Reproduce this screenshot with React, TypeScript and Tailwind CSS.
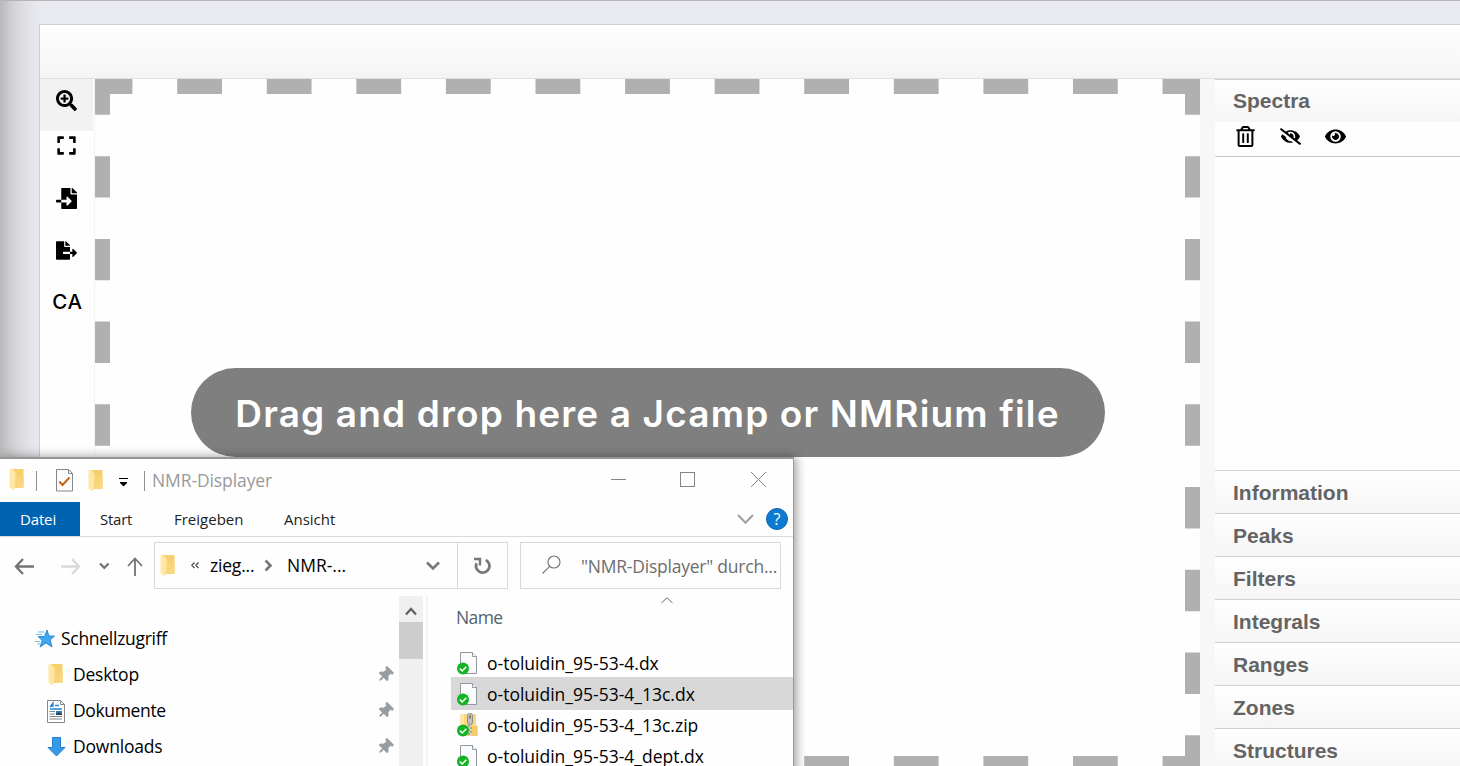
import React from "react";
import {
  FaSearchPlus,
  FaExpand,
  FaFileImport,
  FaFileExport,
  FaRegTrashAlt,
  FaEyeSlash,
  FaEye,
  FaThumbtack,
} from "react-icons/fa";

const sections = ["Information", "Peaks", "Filters", "Integrals", "Ranges", "Zones", "Structures"];

const files = [
  { name: "o-toluidin_95-53-4.dx", zip: false, selected: false },
  { name: "o-toluidin_95-53-4_13c.dx", zip: false, selected: true },
  { name: "o-toluidin_95-53-4_13c.zip", zip: true, selected: false },
  { name: "o-toluidin_95-53-4_dept.dx", zip: false, selected: false },
];

function Folder() {
  return (
    <svg width="15" height="22" viewBox="0 0 15 22" className="block shrink-0">
      <path d="M1 0H14.5V19H10V12L7 10Z" fill="#f6d06c" />
      <path d="M10 12H14.5V19H10Z" fill="#f9d985" />
      <path d="M0.5 0H3L6 3V19L4.5 21.5L0.5 18.5Z" fill="#ffe8a6" />
      <path d="M6 3L7.5 4V19H5.5Z" fill="#fbdc8c" />
      <path d="M7.5 7H14.5V13L10 15V19H6Z" fill="#f8d47a" />
    </svg>
  );
}

function FileIcon({ zip }: { zip: boolean }) {
  return (
    <svg width="22" height="24" viewBox="0 0 22 24" className="block shrink-0">
      {zip ? (
        <g>
          <path d="M3.5 1H19V12L20.5 13V23H3.5Z" fill="#fbd77f" />
          <path d="M3.5 1H7V23H3.5Z" fill="#fee6a6" />
          <path d="M14.5 13H20.5V23H14.5Z" fill="#f5cb6e" />
          <path d="M11 11h4v12h-4z" fill="#ddd2b5" />
          <path d="M11 13h2M13 15h2M11 17h2M13 19h2M11 21h2" stroke="#8b806a" strokeWidth="1.2" />
          <rect x="10.5" y="0.5" width="5" height="11" rx="2" fill="#c2c2c2" stroke="#8d8d8d" />
          <path d="M13 2.5v3" stroke="#555" strokeWidth="1.3" />
        </g>
      ) : (
        <g stroke="#92979f" fill="#fafbfc">
          <path d="M3.5 1.5H15.5L19.5 5.5V22.5H3.5Z" />
          <path d="M15.5 1.5V5.5H19.5" />
        </g>
      )}
      <circle cx="6" cy="17.5" r="6" fill="#12b324" />
      <path d="M2.8 17.5L5.2 20L9.3 15.8" stroke="#fff" strokeWidth="1.5" fill="none" />
    </svg>
  );
}

function DropFrame() {
  return (
    <svg width="1105" height="692" className="absolute top-0 left-0" stroke="#b0b0b0" strokeWidth="15">
      <line x1="0" y1="7.5" x2="1105" y2="7.5" strokeDasharray="44.8 44.78" strokeDashoffset="7.4" />
      <line x1="0" y1="684.5" x2="1105" y2="684.5" strokeDasharray="44.8 44.78" strokeDashoffset="7.4" />
      <line x1="7.5" y1="0" x2="7.5" y2="692" strokeDasharray="41.37 41.37" strokeDashoffset="5.6" />
      <line x1="1097.5" y1="0" x2="1097.5" y2="692" strokeDasharray="41.37 41.37" strokeDashoffset="5.6" />
    </svg>
  );
}

function SectionHeader({ title, open = false }: { title: string; open?: boolean }) {
  return (
    <div className="flex h-[43px] shrink-0 items-center border-t border-[#d0d0d0] bg-linear-to-b from-white to-[#f5f5f5] pl-[18px] font-['Liberation_Sans',sans-serif] text-[21px] leading-none font-bold text-[#646464]">
      <span className={open ? "pb-0.5" : ""}>{title}</span>
    </div>
  );
}

function SidebarIcon({ kind }: { kind: string }) {
  if (kind === "folder") return <div className="pl-0.5"><Folder /></div>;
  if (kind === "document")
    return (
      <svg width="18" height="23" viewBox="0 0 18 23" className="ml-px">
        <path d="M.5 .5H13.5L17.5 4.5V22.5H.5Z" fill="#fff" stroke="#83888d" />
        <path d="M13.5 .5V4.5H17.5" fill="none" stroke="#83888d" />
        <path d="M3 7L6 3V7M4 6H6M8 5.5H12M3 9H15" stroke="#2584d8" strokeWidth="1.3" fill="none" />
        <path d="M2.5 11.5H8M2.5 14H8M2.5 16.5H15M2.5 19H15" stroke="#7f8589" strokeWidth="1.1" />
        <path d="M9 11H15V15H9Z" fill="#397bad" />
        <path d="M9 13.5L12 12.5L15 14V15H9Z" fill="#28455f" />
      </svg>
    );
  return (
    <svg width="19" height="20" viewBox="0 0 19 20" className="ml-px">
      <path d="M5.5 .5H13.5V10.5H18L9.5 19L1 10.5H5.5Z" fill="#359be8" stroke="#2680ce" />
    </svg>
  );
}

const places = [
  { name: "Desktop", kind: "folder", cls: "tracking-[-0.24px]" },
  { name: "Dokumente", kind: "document", cls: "tracking-[-0.36px]" },
  { name: "Downloads", kind: "download", cls: "tracking-[-0.2px]" },
];

function Explorer() {
  return (
    <div className="absolute top-[456px] left-0 h-[320px] w-[794px] border-t-2 border-r border-t-[#96969a] border-r-[#9a9a9a] bg-[#fefefe] font-['Open_Sans','Noto_Sans',sans-serif] text-[17.5px] leading-none text-black shadow-[2px_0_10px_rgba(0,0,0,0.4)]">
      <div className="flex h-[43px] items-center">
        <div className="flex w-[152px] items-center pl-[9px]">
          <div className="pb-0.5"><Folder /></div>
          <div className="ml-3 h-5 w-px bg-[#8e8e8e]" />
          <svg width="18" height="23" viewBox="0 0 18 23" className="ml-[19px] block">
            <path d="M.5 .5H12.5L16.5 4.5V22H.5Z" fill="#fafbfd" stroke="#85888d" />
            <path d="M12.5 .5V4.5H16.5" fill="none" stroke="#85888d" />
            <path d="M3.3 12.5L6.5 16L13.5 8.5" stroke="#c86410" strokeWidth="2" fill="none" />
          </svg>
          <div className="ml-[14px]"><Folder /></div>
          <svg width="9" height="9" viewBox="0 0 9 9" className="mt-1 ml-4 block">
            <path d="M0 .5H9" stroke="#000" />
            <path d="M1 4H8V5L4.5 8.5L1 5Z" fill="#000" />
          </svg>
          <div className="ml-4 h-5 w-px bg-[#8e8e8e]" />
        </div>
        <div className="grow tracking-[-0.1px] text-[#999]">NMR-Displayer</div>
        <div className="flex w-[183px] items-center pb-0.5">
          <svg width="158" height="18" viewBox="0 0 158 18" stroke="#858585" fill="none">
            <path d="M1 8.5H16" />
            <rect x="70.5" y="1.5" width="14" height="14" />
            <path d="M141 1L156 16M156 1L141 16" />
          </svg>
        </div>
      </div>

      <div className="flex h-[35px] items-stretch border-b border-[#dadada] text-[15px] text-[#222]">
        <div className="flex w-20 items-center bg-[#0063b1] pl-5 tracking-[-0.15px] text-white">Datei</div>
        <div className="flex w-[94px] items-center pl-5 tracking-[-0.25px]">Start</div>
        <div className="flex w-[110px] items-center">Freigeben</div>
        <div className="flex grow items-center">Ansicht</div>
        <div className="flex items-center gap-3 pr-[5px]">
          <svg width="17" height="11" viewBox="0 0 17 11" fill="none" stroke="#a0a0a0" strokeWidth="2">
            <path d="M1 1L8.5 8.7L16 1" />
          </svg>
          <div className="flex h-[22px] w-[22px] items-center justify-center rounded-full border border-[#0864b4] bg-[#0d7bd3] text-[16px] text-white">?</div>
        </div>
      </div>

      <div className="flex h-[59px] items-start pt-[5px]">
        <div className="flex h-[47px] w-[154px] items-center pb-0.5 pl-[14px]">
          <svg width="130" height="22" viewBox="0 0 130 22" fill="none">
            <path d="M20 12.5H2M9 5L2 12.5L9 20" stroke="#747474" strokeWidth="2.4" />
            <path d="M47 12.5H65M58 5L65 12.5L58 20" stroke="#d9d9d9" strokeWidth="2.4" />
            <path d="M86 9.5L90.3 13.8L94.6 9.5" stroke="#777" strokeWidth="2.4" />
            <path d="M121 22V4M114 12L121 4.5L128 12" stroke="#747474" strokeWidth="1.8" />
          </svg>
        </div>
        <div className="flex h-[47px] w-[354px] items-center border border-[#d9d9d9]">
          <div className="pl-[5px]"><Folder /></div>
          <svg width="8" height="7" viewBox="0 0 8 7" className="ml-[16px]" fill="none" stroke="#444" strokeWidth="1.2">
            <path d="M3.5 .5L.8 3.3L3.5 6M7.5 .5L4.8 3.3L7.5 6" />
          </svg>
          <div className="ml-[11px] w-[54px] tracking-[-0.2px]">zieg...</div>
          <svg width="9" height="13" viewBox="0 0 9 13" fill="none" stroke="#777" strokeWidth="2.6">
            <path d="M1.5 1.5L6.5 6.5L1.5 11.5" />
          </svg>
          <div className="ml-[14px] grow">NMR-...</div>
          <svg width="14" height="10" viewBox="0 0 14 10" fill="none" stroke="#777" strokeWidth="2.6" className="mr-[17px]">
            <path d="M1 1.5L7 7.5L13 1.5" />
          </svg>
          <div className="flex h-full w-[50px] items-center justify-center border-l border-[#d9d9d9]">
            <svg width="17" height="18" viewBox="0 0 17 18" fill="none" stroke="#777" strokeWidth="2.8">
              <path d="M11.8 3A6.7 6.7 0 1 1 2.6 6.2" />
              <path d="M0 2H6V8.5" strokeWidth="2.4" />
            </svg>
          </div>
        </div>
        <div className="ml-3 flex h-[47px] w-[261px] items-center border border-[#d9d9d9]">
          <svg width="19" height="19" viewBox="0 0 19 19" fill="none" stroke="#777" className="mb-0.5 ml-[21px] shrink-0" strokeWidth="1.2">
            <circle cx="12" cy="7" r="6" />
            <path d="M7.7 11.3L.5 18.5" />
          </svg>
          <div className="ml-5 pt-0.5 tracking-[-0.22px] whitespace-nowrap text-[#6d6d6d]">"NMR-Displayer" durch...</div>
        </div>
      </div>

      <div className="flex h-[180px]">
        <div className="w-[399px] pt-[25px]">
          <div className="flex h-9 items-center pl-[35px]">
            <svg width="20" height="18" viewBox="0 0 20 18">
              <path d="M12 0L14 6H19.5L15.2 10L17 17L11 13L5 17L7.2 10.5L3 6.5H9.5Z" fill="#3fa7ee" stroke="#197cc7" strokeWidth=".8" />
              <path d="M3 2H9M1 4.5H7M0 11.5H5M2 14H5" stroke="#73b9e8" />
            </svg>
            <div className="ml-1.5 tracking-[-0.28px]">Schnellzugriff</div>
          </div>
          {places.map((p) => (
            <div key={p.name} className="flex h-9 items-center pl-[46px]">
              <div className="flex w-[27px] items-center">
                <SidebarIcon kind={p.kind} />
              </div>
              <div className={p.cls}>{p.name}</div>
              <FaThumbtack className="mr-1.5 ml-auto rotate-45 text-[#989da1]" size={16} />
            </div>
          ))}
        </div>
        <div className="w-6 bg-[#f0f0f0]">
          <div className="flex h-[26px] items-center justify-center">
            <svg width="12" height="9" viewBox="0 0 12 9" fill="none" stroke="#606060" strokeWidth="2.2" className="mt-1">
              <path d="M1 7.5L6 2L11 7.5" />
            </svg>
          </div>
          <div className="h-[37px] bg-[#cdcdcd]" />
        </div>
        <div className="ml-[3px] w-[2px] bg-[#f4f4f4]" />
        <div className="ml-[23px] grow">
          <div className="flex h-[51px] items-start">
            <div className="mt-[13px] ml-[5px] w-[205px] tracking-[-0.6px] text-[#53636f]">Name</div>
            <svg width="12" height="7" viewBox="0 0 12 7" fill="none" stroke="#666" className="mt-px">
              <path d="M.5 6L6 .8L11.5 6" />
            </svg>
          </div>
          {files.map((f) => (
            <div key={f.name} className={f.selected ? "-my-px flex h-[33px] items-center bg-[#d8d8d8] pl-[6px]" : "flex h-[31px] items-center pl-[6px]"}>
              <FileIcon zip={f.zip} />
              <div className="pt-[3px] pl-2 whitespace-nowrap">{f.name}</div>
            </div>
          ))}
        </div>
      </div>
    </div>
  );
}

export default function App() {
  return (
    <div className="relative flex h-[766px] w-[1460px] flex-col overflow-hidden border-t border-[#b4b4b8] bg-[#e9eaef]">
      <div className="h-[23px] shrink-0 bg-[linear-gradient(to_right,#b9b9bb_0px,#d2d2d4_13px,#e0e1e5_26px,#e9eaef_40px)]" />
      <div className="flex min-h-0 grow bg-[linear-gradient(to_right,#b9b9bb_0px,#d2d2d4_13px,#e0e1e5_26px,#e9eaef_40px)] pl-[39px]">
        <div className="flex grow flex-col border-t border-l border-[#cfcfd2] bg-[#fefefe]">
          <div className="h-[54px] shrink-0 border-b border-[#e0e0e0] bg-linear-to-b from-white to-[#f4f4f4]" />
          <div className="flex h-[692px] shrink-0">
            <div className="flex w-[55px] flex-col items-center border-r border-[#f3f3f3] pr-px text-black">
              <div className="flex h-[52px] w-[53px] items-start justify-center bg-[#f2f2f2] pt-[11px]">
                <FaSearchPlus size={21} />
              </div>
              <FaExpand size={21} className="mt-1" />
              <FaFileImport size={21} className="mt-8" />
              <FaFileExport size={21} className="mt-[31px]" />
              <div className="mt-[29px] ml-0.5 font-['Inter',sans-serif] text-[20.5px] leading-[24px] font-medium tracking-[0.8px]">CA</div>
            </div>
            <div className="relative flex w-[1105px] items-start justify-center pt-[289px]">
              <DropFrame />
              <div className="flex h-[89px] w-[914px] items-center justify-center rounded-full bg-[#7f7f7f] pt-px font-['Inter',sans-serif] text-[37px] leading-none font-semibold tracking-[1.15px] whitespace-nowrap text-white">
                Drag and drop here a Jcamp or NMRium file
              </div>
            </div>
            <div className="w-[15px] bg-[#f7f7f7]" />
            <div className="flex grow flex-col">
              <SectionHeader title="Spectra" open />
              <div className="flex h-[35px] shrink-0 items-start border-b border-[#c8c8c8] pt-1 pl-5 text-black">
                <FaRegTrashAlt size={21} />
                <FaEyeSlash size={21} className="ml-6" />
                <FaEye size={21} className="ml-6" />
              </div>
              <div className="h-[313px] shrink-0" />
              {sections.map((s) => (
                <SectionHeader key={s} title={s} />
              ))}
            </div>
          </div>
        </div>
      </div>
      <Explorer />
    </div>
  );
}
